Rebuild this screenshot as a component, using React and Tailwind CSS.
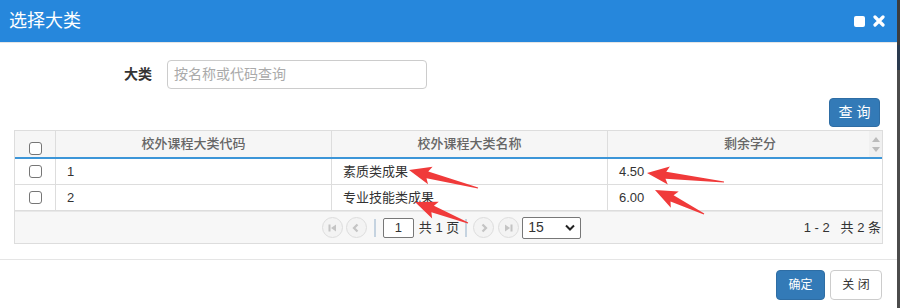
import React from "react";

const font = { fontFamily: '"Liberation Sans", "Noto Sans CJK SC", sans-serif' };

// red annotation arrow, tip -> tail
const arrowPoints = (tx, ty, ex, ey) => {
  const dx = ex - tx;
  const dy = ey - ty;
  const len = Math.hypot(dx, dy);
  const ux = dx / len;
  const uy = dy / len;
  const nx = -uy;
  const ny = ux;
  const head = 22;
  const hw = 9;
  const sw = 3.5;
  const bx = tx + ux * head;
  const by = ty + uy * head;
  const pts = [
    [tx, ty],
    [bx + nx * hw, by + ny * hw],
    [bx + ux * -3 + nx * sw, by + uy * -3 + ny * sw],
    [ex + nx * 0.6, ey + ny * 0.6],
    [ex - nx * 0.6, ey - ny * 0.6],
    [bx + ux * -3 - nx * sw, by + uy * -3 - ny * sw],
    [bx - nx * hw, by - ny * hw],
  ];
  return pts.map((p) => p.join(",")).join(" ");
};

const Checkbox = () => (
  <span className="inline-block w-[13px] h-[13px] rounded-[3px] border border-[#767676] bg-white" />
);

const PageBtn = ({ children }) => (
  <span className="w-[21px] h-[21px] rounded-full border border-[#ddd] bg-[#f3f3f3] flex items-center justify-center">
    <svg width="12" height="12" viewBox="0 0 12 12" fill="#c4c4c4">
      {children}
    </svg>
  </span>
);

const rows = [
  { code: "1", name: "素质类成果", credit: "4.50" },
  { code: "2", name: "专业技能类成果", credit: "6.00" },
];

export default function App() {
  return (
    <div className="flex w-[900px] h-[308px] bg-[#4b4b4b]" style={font}>
      <div className="relative w-[897px] h-full bg-white flex flex-col">
        {/* title bar */}
        <div className="h-[43px] bg-[#2687dc] flex items-center justify-between pl-[9px] pr-[12px] border-b border-[#e5e5e5]">
          <span className="text-white text-[18px]">选择大类</span>
          <div className="flex items-center gap-[8px]">
            <span className="w-[11px] h-[11px] bg-white rounded-[2px]" />
            <svg width="12" height="12" viewBox="0 0 12 12">
              <path d="M2 2 L10 10 M10 2 L2 10" stroke="white" strokeWidth="3.2" strokeLinecap="round" />
            </svg>
          </div>
        </div>

        {/* search */}
        <div className="flex items-center mt-[17px] h-[29px]">
          <span className="w-[152px] text-right text-[14px] font-bold text-[#333]">大类</span>
          <div className="ml-[15px] w-[260px] h-[29px] border border-[#ccc] rounded-[4px] flex items-center px-[6px] text-[14px] text-[#aaa]">
            按名称或代码查询
          </div>
        </div>
        <div className="flex justify-end pr-[17px] mt-[9px]">
          <button className="w-[51px] h-[29px] bg-[#337ab7] border border-[#2e6da4] rounded-[4px] text-white text-[14px]">
            查&nbsp;询
          </button>
        </div>

        {/* grid */}
        <div className="mx-[14px] mt-[3px] border border-[#ddd] text-[13px]">
          <div className="relative flex h-[28px] bg-[#f6f6f6] border-b-2 border-[#3d96d8] text-[#666] font-medium">
            <div className="w-[41px] flex items-end justify-center pb-[2px] border-r border-[#ddd]">
              <Checkbox />
            </div>
            <div className="w-[276px] flex items-center justify-center border-r border-[#ddd]">校外课程大类代码</div>
            <div className="w-[276px] flex items-center justify-center border-r border-[#ddd]">校外课程大类名称</div>
            <div className="flex-1 flex items-center justify-center pl-[10px]">剩余学分</div>
            <div className="absolute right-0 top-0 bottom-0 w-[13px] bg-[#f0f0f0] flex flex-col items-center justify-center gap-[5px]">
              <svg width="8" height="5" viewBox="0 0 8 5"><path d="M0 5 L4 0 L8 5Z" fill="#bbb" /></svg>
              <svg width="8" height="5" viewBox="0 0 8 5"><path d="M0 0 L4 5 L8 0Z" fill="#bbb" /></svg>
            </div>
          </div>
          {rows.map((r) => (
            <div key={r.code} className="flex h-[26px] border-b border-[#ddd] text-[#333]">
              <div className="w-[41px] flex items-center justify-center border-r border-[#ddd]">
                <Checkbox />
              </div>
              <div className="w-[276px] flex items-center pl-[11px] border-r border-[#ddd]">{r.code}</div>
              <div className="w-[276px] flex items-center pl-[11px] border-r border-[#ddd]">{r.name}</div>
              <div className="flex-1 flex items-center pl-[11px]">{r.credit}</div>
            </div>
          ))}
          <div className="relative flex items-center justify-center h-[32px] bg-[#f7f7f7] border-t border-[#e8e8e8] text-[#333]">
            <div className="flex items-center ml-[6px]">
              <PageBtn>
                <rect x="2.5" y="2.5" width="2" height="7" />
                <path d="M10 2.5 L5 6 L10 9.5Z" />
              </PageBtn>
              <span className="ml-[3px]">
                <PageBtn>
                  <path d="M7.5 2.5 L4 6 L7.5 9.5" stroke="#c4c4c4" strokeWidth="2.2" fill="none" />
                </PageBtn>
              </span>
              <span className="mx-[7px] w-[2px] h-[18px] bg-[#c5d3e0]" />
              <span className="w-[31px] h-[20px] border border-[#777] rounded-[2px] bg-white flex items-center justify-center">1</span>
              <span className="ml-[5px]">共 1 页</span>
              <span className="mx-[6px] w-[2px] h-[18px] bg-[#c5d3e0]" />
              <PageBtn>
                <path d="M4.5 2.5 L8 6 L4.5 9.5" stroke="#c4c4c4" strokeWidth="2.2" fill="none" />
              </PageBtn>
              <span className="ml-[4px]">
                <PageBtn>
                  <path d="M2 2.5 L7 6 L2 9.5Z" />
                  <rect x="7.5" y="2.5" width="2" height="7" />
                </PageBtn>
              </span>
              <span className="ml-[3px] w-[59px] h-[22px] border border-[#777] rounded-[2px] bg-white flex items-center justify-between px-[5px] text-[14px]">
                15
                <svg width="10" height="7" viewBox="0 0 10 7">
                  <path d="M1 1.5 L5 5.5 L9 1.5" stroke="#222" strokeWidth="2" fill="none" />
                </svg>
              </span>
            </div>
            <span className="absolute right-[1px] text-[13px] text-[#333]">1 - 2&nbsp;&nbsp;&nbsp;共 2 条</span>
          </div>
        </div>

        {/* footer */}
        <div className="mt-[15px] border-t border-[#e5e5e5] flex justify-end gap-[5px] pr-[15px] pt-[10px]">
          <button className="w-[49px] h-[30px] bg-[#337ab7] border border-[#2e6da4] rounded-[4px] text-white text-[12px]">
            确定
          </button>
          <button className="w-[52px] h-[30px] bg-white border border-[#ccc] rounded-[4px] text-[#333] text-[12px]">
            关&nbsp;闭
          </button>
        </div>

        {/* annotation arrows */}
        <svg className="absolute left-0 top-0 pointer-events-none" width="897" height="308">
          <polygon points={arrowPoints(409, 170, 478, 188)} fill="#f03a3a" />
          <polygon points={arrowPoints(415, 202, 468, 223)} fill="#f03a3a" />
          <polygon points={arrowPoints(647, 173, 724, 182)} fill="#f03a3a" />
          <polygon points={arrowPoints(655, 190, 704, 214)} fill="#f03a3a" />
        </svg>
      </div>
      <div className="flex-1 flex flex-col">
        <div className="h-[45px] bg-[#3c3c3c]" />
        <div className="h-[25px] bg-[#2a3a4e]" />
        <div className="flex-1 bg-[#4b4b4b]" />
      </div>
    </div>
  );
}
